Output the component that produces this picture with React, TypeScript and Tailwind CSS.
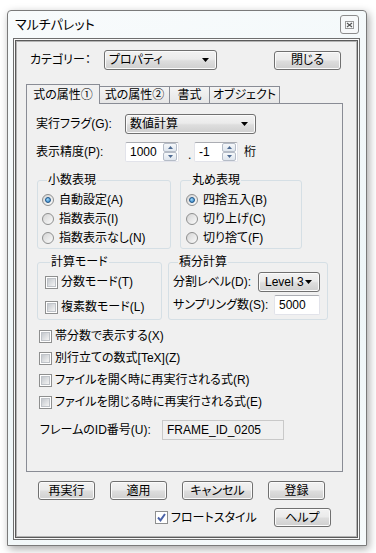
import React from 'react';

const btnFace =
  'border border-[#707070] rounded-[3px] bg-[linear-gradient(#f2f2f2,#ebebeb_45%,#dddddd_55%,#cfcfcf)] shadow-[inset_0_0_0_1px_#fbfbfb]';

const Btn: React.FC<{ label: string; className?: string }> = ({ label, className = '' }) => (
  <div className={`flex h-[19px] items-center justify-center ${btnFace} ${className}`}>{label}</div>
);

const Arrow = () => (
  <svg width="7" height="4" viewBox="0 0 7 4">
    <path d="M0 0h7L3.5 4z" fill="#000" />
  </svg>
);

const Combo: React.FC<{ value: string; className?: string }> = ({ value, className = '' }) => (
  <div className={`flex h-[20px] items-center justify-between pl-[4px] pr-[7px] ${btnFace} ${className}`}>
    <span>{value}</span>
    <Arrow />
  </div>
);

const TextBox: React.FC<{ value: string; className?: string }> = ({ value, className = '' }) => (
  <div
    className={`flex h-[20px] items-center rounded-[2px] border border-[#e2e3ea] border-t-[#abadb3] bg-white pl-[4px] ${className}`}
  >
    {value}
  </div>
);

const SpinBtn: React.FC<{ up?: boolean }> = ({ up }) => (
  <div className="flex h-[9px] w-[14px] items-center justify-center rounded-[2px] border border-[#b5bcc7] bg-[linear-gradient(#f6f8fa,#dfe6ee)]">
    <svg width="5" height="3" viewBox="0 0 5 3">
      <path d={up ? 'M0 3h5L2.5 0z' : 'M0 0h5L2.5 3z'} fill="#4d6a92" />
    </svg>
  </div>
);

const Spin: React.FC<{ value: string; className: string }> = ({ value, className }) => (
  <div className={`flex h-[20px] items-center justify-between rounded-[2px] border border-[#e2e3ea] border-t-[#abadb3] bg-white pl-[4px] pr-px ${className}`}>
    <span>{value}</span>
    <div className="flex flex-col">
      <SpinBtn up />
      <SpinBtn />
    </div>
  </div>
);

const Radio: React.FC<{ on?: boolean; label: string }> = ({ on, label }) => (
  <div className="flex h-[19px] items-center gap-[5px]">
    <span className="flex h-[12px] w-[12px] items-center justify-center rounded-full border border-[#8e8f8f] bg-[linear-gradient(135deg,#d4d4d4,#fbfbfb)]">
      {on && (
        <span className="h-[6px] w-[6px] rounded-full border border-[#1b5387] bg-[radial-gradient(circle_at_40%_35%,#9bd8fb,#2f7cc0)]" />
      )}
    </span>
    <span>{label}</span>
  </div>
);

const Check: React.FC<{ on?: boolean; label: string; className?: string }> = ({ on, label, className = '' }) => (
  <div className={`flex items-center gap-[3px] ${className}`}>
    <span className="flex h-[13px] w-[13px] items-center justify-center border border-[#8e8f8f] bg-white">
      {on ? (
        <svg width="9" height="9" viewBox="0 0 9 9">
          <path d="M1 4.5l2.5 2.8L8 1" stroke="#4a62a8" strokeWidth="2" fill="none" />
        </svg>
      ) : (
        <span className="h-[9px] w-[9px] border border-[#bfc3c8] bg-[linear-gradient(135deg,#c4c8cd,#f4f4f4)]" />
      )}
    </span>
    <span>{label}</span>
  </div>
);

const Group: React.FC<{ title: string; className: string; children: React.ReactNode }> = ({ title, className, children }) => (
  <fieldset className={`rounded-[3px] border border-[#d5dfe5] ${className}`}>
    <legend className="ml-[5px] px-[1px] leading-[14px]">{title}</legend>
    {children}
  </fieldset>
);

const tabs = ['式の属性①', '式の属性②', '書式', 'オブジェクト'];
const tabWidths = ['w-[74px]', 'w-[71px]', 'w-[41px]', 'w-[71px]'];

const App: React.FC = () => {
  return (
    <div className="h-[553px] w-[376px] overflow-hidden whitespace-nowrap bg-white pl-[7px] pt-[10px] font-['Liberation_Sans','Noto_Sans_CJK_JP',sans-serif] text-[12px] leading-[14px] text-black [font-feature-settings:'palt']">
      <div className="flex h-[536px] w-[360px] flex-col rounded-t-[4px] border border-[#7a7a7a] bg-[linear-gradient(160deg,#f8fbfc,#eef6f8_60%,#f6fafb)] shadow-[2px_3px_8px_rgba(0,0,0,0.35)]">
        {/* title bar */}
        <div className="flex h-[27px] items-center justify-between px-[7px]">
          <span className="text-[13px]">マルチパレット</span>
          <div className="flex h-[19px] w-[19px] items-center justify-center rounded-[3px] border border-[#8c8c8c] bg-[#f7f9fa]">
            <svg width="9" height="8" viewBox="0 0 9 8">
              <rect x="0.5" y="0.5" width="8" height="7" fill="none" stroke="#9a9a9a" />
              <path d="M2 2l5 4M7 2l-5 4" stroke="#555" strokeWidth="1.2" />
            </svg>
          </div>
        </div>

        {/* inner frame */}
        <div className="mb-[5px] ml-[5px] mr-[6px] flex-1 border border-[#6e6e6e] bg-[#fafafa] p-px">
          <div className="h-full border border-[#5a5a5a]">
            <div className="flex h-full flex-col border border-[#b4b4b4] bg-[#f0f0f0]">
              {/* category row */}
              <div className="mt-[8px] flex items-center pl-[13px] pr-[15px]">
                <span className="w-[74px]">カテゴリー：</span>
                <Combo value="プロパティ" className="w-[113px]" />
                <Btn label="閉じる" className="ml-auto w-[67px]" />
              </div>

              {/* tabs */}
              <div className="ml-[9px] mt-[14px] flex items-end">
                {tabs.map((t, i) =>
                  i === 0 ? (
                    <div
                      key={t}
                      className={`relative z-10 -mb-px flex h-[20px] items-center justify-center border border-b-0 border-[#898c95] bg-[#f0f0f0] ${tabWidths[i]}`}
                    >
                      {t}
                    </div>
                  ) : (
                    <div
                      key={t}
                      className={`-ml-px flex h-[17px] items-center justify-center border border-b-0 border-[#898c95] bg-[linear-gradient(#f4f4f4,#e6e6e6)] ${tabWidths[i]}`}
                    >
                      {t}
                    </div>
                  )
                )}
              </div>
              <div className="ml-[9px] flex h-[369px] w-[317px] flex-col border border-[#898c95] bg-[#f0f0f0] pl-[9px]">
                <div className="mt-[10px] flex items-center">
                  <span className="w-[89px]">実行フラグ(G):</span>
                  <Combo value="数値計算" className="w-[131px]" />
                </div>
                <div className="mt-[8px] flex items-center">
                  <span className="w-[89px]">表示精度(P):</span>
                  <Spin value="1000" className="w-[54px]" />
                  <span className="ml-[9px] mt-[6px] w-[6px]">.</span>
                  <Spin value="-1" className="ml-[0px] w-[44px]" />
                  <span className="ml-[6px]">桁</span>
                </div>

                <div className="ml-px mt-[11px] flex gap-[9px]">
                  <Group title="小数表現" className="h-[76px] w-[134px] pl-[4px] pt-[3px]">
                    <Radio on label="自動設定(A)" />
                    <Radio label="指数表示(I)" />
                    <Radio label="指数表示なし(N)" />
                  </Group>
                  <Group title="丸め表現" className="h-[76px] w-[122px] pl-[5px] pt-[3px]">
                    <Radio on label="四捨五入(B)" />
                    <Radio label="切り上げ(C)" />
                    <Radio label="切り捨て(F)" />
                  </Group>
                </div>

                <div className="ml-px mt-[6px] flex gap-[6px]">
                  <Group title="計算モード" className="h-[65px] w-[125px] pl-[7px] pt-[6px]">
                    <Check label="分数モード(T)" />
                    <Check label="複素数モード(L)" className="mt-[11px]" />
                  </Group>
                  <Group title="積分計算" className="h-[65px] w-[160px] pl-[4px] pr-[7px] pt-[3px]">
                    <div className="flex items-center justify-between">
                      <span>分割レベル(D):</span>
                      <Combo value="Level 3" className="w-[62px] pl-[6px] pr-[5px]" />
                    </div>
                    <div className="mt-[3px] flex items-center justify-between">
                      <span>サンプリング数(S):</span>
                      <TextBox value="5000" className="w-[46px]" />
                    </div>
                  </Group>
                </div>

                <div className="ml-[3px] mt-[9px] flex flex-col gap-[8px]">
                  <Check label="帯分数で表示する(X)" />
                  <Check label="別行立ての数式[TeX](Z)" />
                  <Check label="ファイルを開く時に再実行される式(R)" />
                  <Check label="ファイルを閉じる時に再実行される式(E)" />
                </div>

                <div className="ml-[4px] mt-[11px] flex items-center">
                  <span className="w-[122px]">フレームのID番号(U):</span>
                  <div className="flex h-[20px] w-[122px] items-center border border-[#c9c9c9] bg-[#f0f0f0] pl-[4px]">
                    FRAME_ID_0205
                  </div>
                </div>
              </div>

              {/* bottom buttons */}
              <div className="ml-[21px] mt-[9px] flex gap-[15px]">
                <Btn label="再実行" className="w-[57px]" />
                <Btn label="適用" className="w-[57px]" />
                <Btn label="キャンセル" className="w-[71px]" />
                <Btn label="登録" className="w-[57px]" />
              </div>
              <div className="mt-[8px] flex items-center">
                <Check on label="フロートスタイル" className="ml-[138px]" />
                <Btn label="ヘルプ" className="ml-[17px] w-[57px]" />
              </div>
            </div>
          </div>
        </div>
      </div>
    </div>
  );
};

export default App;
